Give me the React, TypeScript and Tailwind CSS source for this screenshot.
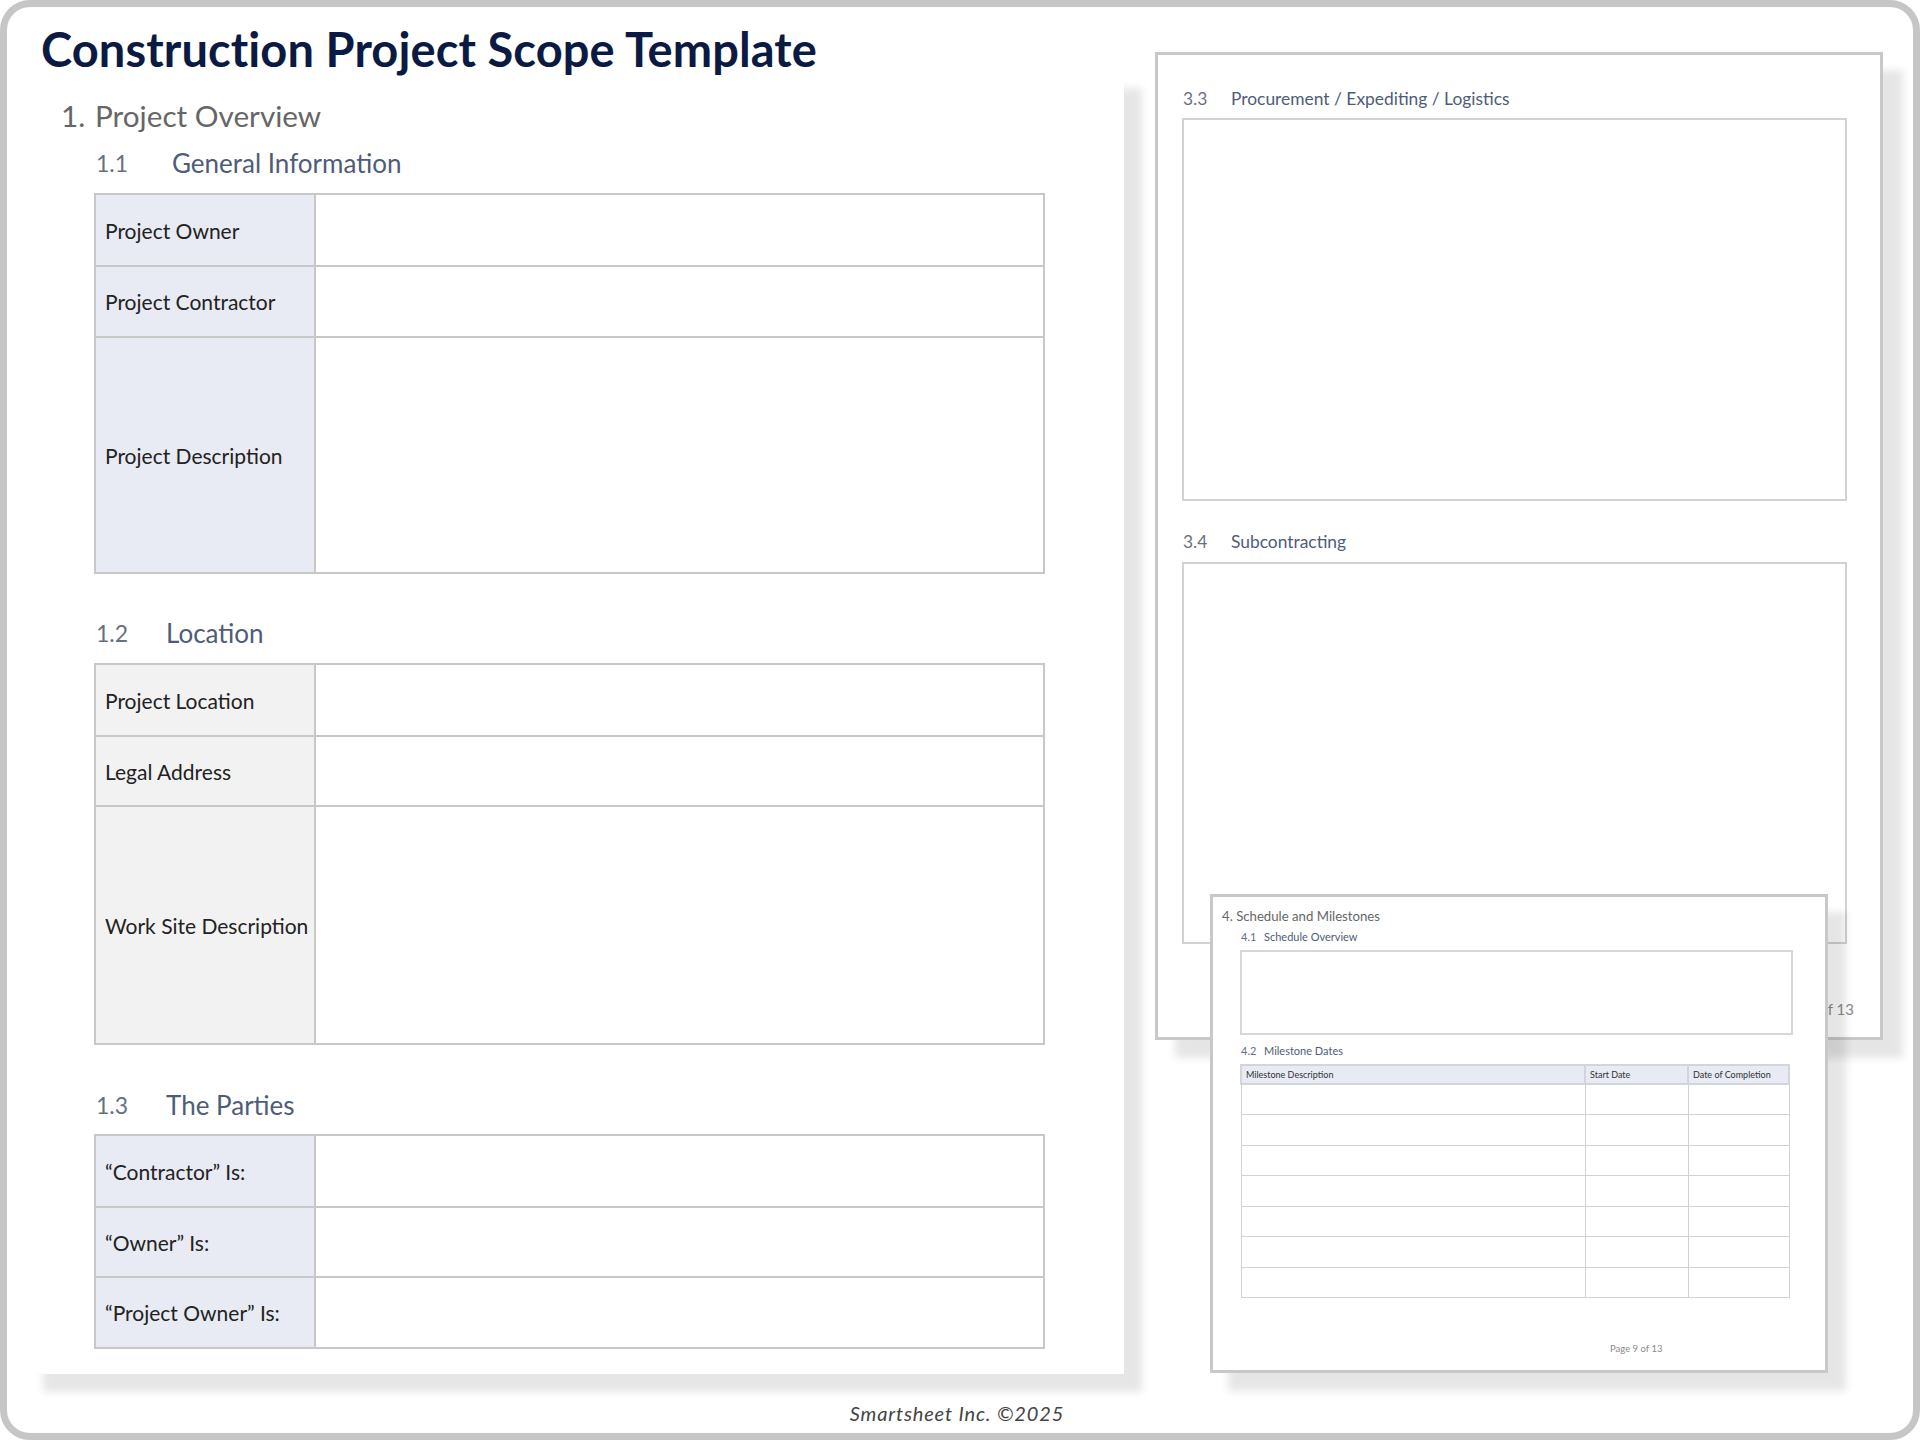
const rowLabels = (bg: string, rows: { label: string; h: string }[]) => (
  <div className="w-[951px] border-2 border-[#c8c8c8] ml-[69px]">
    {rows.map((r, i) => (
      <div key={r.label} className={`flex ${r.h} ${i < rows.length - 1 ? 'border-b-2 border-[#c8c8c8]' : ''}`}>
        <div className={`w-[220px] shrink-0 flex items-center pl-[9px] pt-[1px] border-r-2 border-[#c8c8c8] text-[21px] text-[#222222] ${bg}`}>
          {r.label}
        </div>
        <div className="flex-1 bg-white" />
      </div>
    ))}
  </div>
);

function SubHeading({ num, title, numW, className }: { num: string; title: string; numW: string; className: string }) {
  return (
    <div className={`flex items-center h-10 pl-[71px] ${className}`}>
      <span className={`${numW} text-[23px] text-[#68707f]`}>{num}</span>
      <span className="text-[26px] text-[#4f5c78]">{title}</span>
    </div>
  );
}

const milestoneRows = [0, 1, 2, 3, 4, 5, 6];

function MilestoneTable() {
  return (
    <table className="mt-[5px] ml-[27px] w-[550px] table-fixed border-collapse">
      <thead>
        <tr className="h-[19px] bg-[#e8ebf3] text-left text-[9px] text-[#333333]">
          <th className="w-[344px] border-2 border-[#d2d5da] pl-[4px] font-normal">Milestone Description</th>
          <th className="w-[103px] border-2 border-[#d2d5da] pl-[4px] font-normal">Start Date</th>
          <th className="border-2 border-[#d2d5da] pl-[4px] font-normal">Date of Completion</th>
        </tr>
      </thead>
      <tbody>
        {milestoneRows.map(i => (
          <tr key={i} className="h-[30.5px]">
            <td className="border border-[#d2d2d2]" />
            <td className="border border-[#d2d2d2]" />
            <td className="border border-[#d2d2d2]" />
          </tr>
        ))}
      </tbody>
    </table>
  );
}

export default function App() {
  return (
    <div className="w-[1920px] h-[1440px] bg-white font-['Lato','Liberation_Sans',sans-serif]">
      <div className="h-full border-[7px] border-[#c6c6c6] rounded-[30px] flex flex-col overflow-hidden">
        <div className="flex h-[1395px] shrink-0">
          {/* Left page */}
          <div className="w-[1117px] shrink-0 pl-[18px]">
            <div className="h-[63px] pt-[22px] pl-[16px] flex items-center">
              <h1 className="relative z-10 text-[47px] font-bold tracking-[0.1px] text-[#0a1a42] whitespace-nowrap leading-none">
                Construction Project Scope Template
              </h1>
            </div>
            <div className="relative w-[1099px] h-[1304px] bg-white pt-[26px] shadow-[18px_18px_8px_rgba(0,0,0,0.1)]">
              <div className="flex items-center h-10 pl-[36px] text-[29.7px] text-[#666666]">
                <span className="w-[34px]">1.</span>
                <span>Project Overview</span>
              </div>
              <SubHeading num="1.1" title="General Information" numW="w-[76px]" className="mt-[7px] mb-[10px]" />
              {rowLabels('bg-[#e8ebf3]', [
                { label: 'Project Owner', h: 'h-[72px]' },
                { label: 'Project Contractor', h: 'h-[71px]' },
                { label: 'Project Description', h: 'h-[234px]' },
              ])}
              <SubHeading num="1.2" title="Location" numW="w-[70px]" className="mt-[39px] mb-[10px]" />
              {rowLabels('bg-[#f2f2f2]', [
                { label: 'Project Location', h: 'h-[72px]' },
                { label: 'Legal Address', h: 'h-[70px]' },
                { label: 'Work Site Description', h: 'h-[236px]' },
              ])}
              <SubHeading num="1.3" title="The Parties" numW="w-[70px]" className="mt-[40px] mb-[9px]" />
              {rowLabels('bg-[#e8ebf3]', [
                { label: '“Contractor” Is:', h: 'h-[72px]' },
                { label: '“Owner” Is:', h: 'h-[70px]' },
                { label: '“Project Owner” Is:', h: 'h-[69px]' },
              ])}
            </div>
          </div>

          {/* Right pages */}
          <div className="relative w-[728px] h-[988px] ml-[31px] mt-[45px] shrink-0">
            <div className="h-full border-[3px] border-[#c8c8c8] bg-white shadow-[20px_18px_8px_rgba(0,0,0,0.1)] pt-[29px]">
              <div className="flex items-center h-[30px] pl-[25px] text-[17.4px]">
                <span className="w-[48px] text-[#68707f]">3.3</span>
                <span className="text-[#4f5c78]">Procurement / Expediting / Logistics</span>
              </div>
              <div className="mt-[4px] ml-[24px] w-[665px] h-[383px] border-2 border-[#d2d2d2]" />
              <div className="flex items-center h-[30px] mt-[26px] pl-[25px] text-[17.4px]">
                <span className="w-[48px] text-[#68707f]">3.4</span>
                <span className="text-[#4f5c78]">Subcontracting</span>
              </div>
              <div className="mt-[5px] ml-[24px] w-[665px] h-[382px] border-2 border-[#d2d2d2]" />
              <div className="mt-[55px] h-5 pr-[26px] text-right text-[15px] text-[#8a8a8a] leading-5">Page 8 of 13</div>
            </div>

            {/* Overlapping page */}
            <div className="absolute left-[55px] top-[842px] w-[618px] h-[479px] border-[3px] border-[#c8c8c8] bg-white shadow-[18px_18px_8px_rgba(0,0,0,0.1)] pt-[9px]">
              <div className="h-5 pl-[9px] text-[13.2px] leading-5 text-[#666666]">4. Schedule and Milestones</div>
              <div className="flex items-center h-4 mt-[3px] pl-[28px] text-[11px]">
                <span className="w-[23px] text-[#68707f]">4.1</span>
                <span className="text-[#4f5c78]">Schedule Overview</span>
              </div>
              <div className="mt-[5px] ml-[27px] w-[553px] h-[85px] border-2 border-[#d8d8d8]" />
              <div className="flex items-center h-4 mt-[8px] pl-[28px] text-[11px]">
                <span className="w-[23px] text-[#68707f]">4.2</span>
                <span className="text-[#4f5c78]">Milestone Dates</span>
              </div>
              <MilestoneTable />
              <div className="mt-[44px] h-[14px] pl-[397px] text-[9.5px] leading-[14px] text-[#8a8a8a]">Page 9 of 13</div>
            </div>
          </div>
        </div>

        {/* Footer */}
        <div className="text-center italic text-[20px] tracking-[0.85px] text-[#444444] leading-6 -mt-[1px] ml-[-6px]">
          Smartsheet Inc. ©2025
        </div>
      </div>
    </div>
  );
}
